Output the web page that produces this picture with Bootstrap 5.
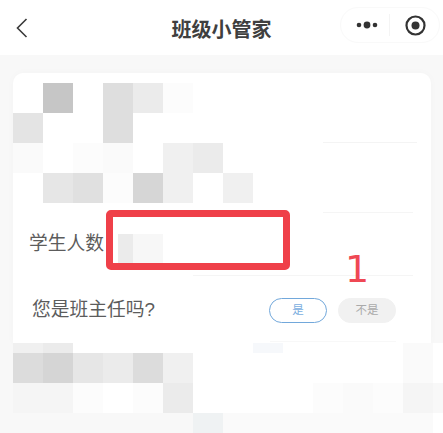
<!doctype html>
<html lang="zh">
<head>
<meta charset="utf-8">
<title>班级小管家</title>
<link href="https://cdn.jsdelivr.net/npm/bootstrap@5.3.0/dist/css/bootstrap.min.css" rel="stylesheet">
<style>
html,body{height:433px;overflow:hidden}
body{background:#f8f8f8;font-family:"Liberation Sans","Noto Sans CJK SC",sans-serif;color:#555}
.topbar{height:55px;background:#fff;padding:0 3px 0 16px}
.topbar-title{left:0;right:0;text-align:center;font-size:20px;font-weight:700;color:#3f3f3f;line-height:60px;top:0}
.capsule{width:100px;height:36px;margin-top:-5px;border:1px solid #f9f9f9;border-radius:18px;padding:0 13px 0 15px}
.capsule-sep{width:1px;height:22px;background:#f4f4f4;margin:0 15px 0 11px}
.sheet{margin:18px 12px 0 13px;height:270px;background:#fff;border-radius:10px 10px 0 0;box-shadow:0 0 8px rgba(0,0,0,.025);padding-top:10px}
.cells{display:grid;grid-template-columns:repeat(10,30px);grid-auto-rows:30px;width:300px}
.side{margin-left:10px;width:94px;height:60px;border-bottom:1px solid #f4f4f4}
.rule{height:1px;background:#f5f5f5;margin:9px 18px 0 310px}
.rule-b{height:1px;background:#f5f5f5;margin:0 18px 0 180px}
.rule-c{height:1px;background:#f8f8f8;margin:0 35px 0 257px}
.field-row{height:62px;padding-left:16px;font-size:18.75px;color:#5c5c5c}
.field-row-b{height:65px;padding:4px 0 0 19px;font-size:18.75px;color:#5c5c5c}
.blur-a{width:15px;height:29px;background:#ebebeb;margin:8px 0 0 14px}
.blur-b{width:30px;height:29px;background:#f7f7f7;margin-top:8px}
.mark-box{left:93px;top:-3px;width:184px;height:60px;border:7px solid #ef4049;border-radius:5px}
.mark-num{left:332px;top:34px;font:38px/44px "DejaVu Sans",sans-serif;color:#ef4854}
.pill{width:58px;height:25px;border-radius:13px;font-size:11.5px;line-height:23px;text-align:center;padding:0}
.pill-on{border:1px solid #72a8db;color:#7aaee0;background:#fff;margin-right:11px}
.pill-off{border:1px solid #f1f1f1;background:#f1f1f1;color:#aaa;margin-right:35px}
.tail{display:grid;grid-template-columns:repeat(14,30px) 10px;grid-template-rows:10px 30px 30px 20px;margin-left:13px;background:#fff}
.w{background:#fff}.a{background:#c6c6c6}.b{background:#dedede}.d{background:#ebebeb}.e{background:#fcfcfc}
.f{background:#e4e4e4}.h{background:#fafafa}.j{background:#f0f0f0}.k{background:#e6e6e6}.l{background:#e0e0e0}.m{background:#d6d6d6}
.n{background:#dcdcdc}.o{background:#d5d5d5}.p{background:#f5f5f5}.q{background:#f8f8f8}.r{background:#eff2f3}.s{background:#f6f8fb}
</style>
</head>
<body>
<header class="topbar position-relative d-flex align-items-center justify-content-between">
  <svg width="12" height="20" viewBox="0 0 12 20" fill="none" stroke="#3a3a3a" stroke-width="1.6"><path d="M10.5 1 1.5 10l9 9"/></svg>
  <div class="topbar-title position-absolute">班级小管家</div>
  <div class="capsule position-relative d-flex align-items-center">
    <svg width="22" height="8" viewBox="0 0 22 8" fill="#333"><circle cx="3" cy="4" r="2.3"/><circle cx="11" cy="4" r="3.4"/><circle cx="19" cy="4" r="2.3"/></svg>
    <span class="capsule-sep"></span>
    <svg width="21" height="21" viewBox="0 0 21 21"><circle cx="10.500" cy="10.500" r="9" fill="none" stroke="#333" stroke-width="2.2"/><circle cx="10.500" cy="10.500" r="4" fill="#333"/></svg>
  </div>
</header>
<main class="sheet">
  <div class="d-flex">
    <div class="cells">
      <i class="w"></i><i class="a"></i><i class="w"></i><i class="b"></i><i class="d"></i><i class="e"></i><i class="w"></i><i class="w"></i><i class="w"></i><i class="w"></i>
      <i class="f"></i><i class="w"></i><i class="w"></i><i class="b"></i><i class="w"></i><i class="w"></i><i class="w"></i><i class="w"></i><i class="w"></i><i class="w"></i>
      <i class="h"></i><i class="w"></i><i class="e"></i><i class="h"></i><i class="w"></i><i class="j"></i><i class="d"></i><i class="w"></i><i class="w"></i><i class="w"></i>
      <i class="w"></i><i class="k"></i><i class="l"></i><i class="e"></i><i class="m"></i><i class="j"></i><i class="w"></i><i class="j"></i><i class="w"></i><i class="w"></i>
    </div>
    <div class="side"></div>
  </div>
  <div class="rule"></div>
  <div class="field-row position-relative d-flex align-items-center">
    <span>学生人数</span>
    <span class="blur-a"></span><span class="blur-b"></span>
    <div class="mark-box position-absolute"></div>
    <div class="mark-num position-absolute">1</div>
  </div>
  <div class="rule-b"></div>
  <div class="field-row-b d-flex align-items-center justify-content-between">
    <span>您是班主任吗?</span>
    <div class="d-flex">
      <button type="button" class="btn pill pill-on">是</button>
      <button type="button" class="btn pill pill-off">不是</button>
    </div>
  </div>
  <div class="rule-c"></div>
</main>
<section class="tail">
  <i class="j"></i><i class="d"></i><i class="w"></i><i class="w"></i><i class="w"></i><i class="w"></i><i class="w"></i><i class="w"></i><i class="s"></i><i class="w"></i><i class="w"></i><i class="w"></i><i class="w"></i><i class="h"></i><i class="w"></i>
  <i class="n"></i><i class="o"></i><i class="k"></i><i class="d"></i><i class="n"></i><i class="j"></i><i class="w"></i><i class="w"></i><i class="w"></i><i class="w"></i><i class="w"></i><i class="w"></i><i class="w"></i><i class="h"></i><i class="w"></i>
  <i class="p"></i><i class="p"></i><i class="e"></i><i class="w"></i><i class="e"></i><i class="d"></i><i class="w"></i><i class="w"></i><i class="w"></i><i class="w"></i><i class="e"></i><i class="h"></i><i class="e"></i><i class="p"></i><i class="q"></i>
  <i class="q"></i><i class="q"></i><i class="q"></i><i class="q"></i><i class="q"></i><i class="q"></i><i class="r"></i><i class="h"></i><i class="h"></i><i class="h"></i><i class="h"></i><i class="h"></i><i class="h"></i><i class="h"></i><i class="w"></i>
</section>
<script src="https://cdn.jsdelivr.net/npm/bootstrap@5.3.0/dist/js/bootstrap.bundle.min.js"></script>
</body>
</html>
